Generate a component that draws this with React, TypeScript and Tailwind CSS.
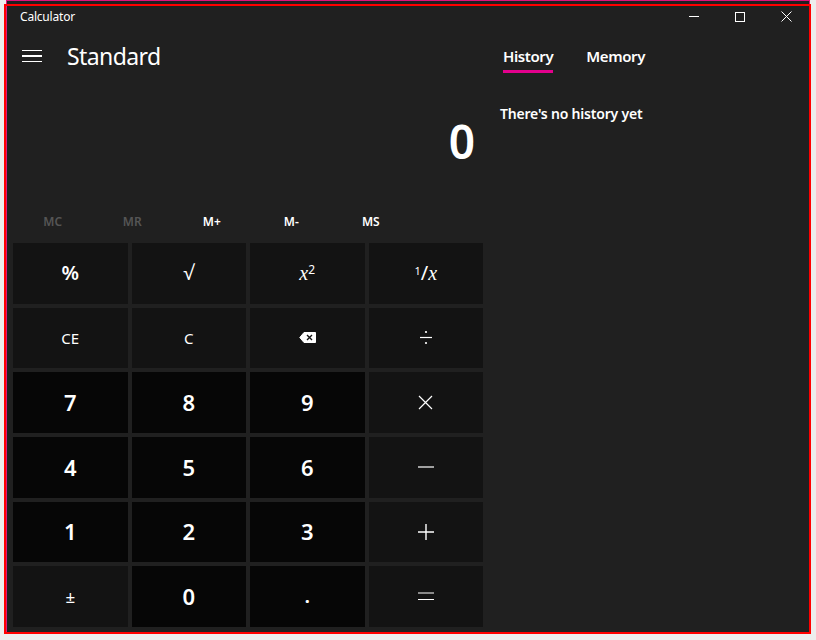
import React from "react";

const font = { fontFamily: '"Noto Sans", "Open Sans", sans-serif' };

type Key = { label: React.ReactNode; kind: "fn" | "num" };

const Minus = () => (
  <svg width="18" height="2" viewBox="0 0 18 2">
    <path d="M1 1 H17" stroke="white" strokeWidth="1.2" />
  </svg>
);

const keys: Key[] = [
  { label: <span className="text-[20px] font-semibold">%</span>, kind: "fn" },
  { label: <span className="text-[20px]">√</span>, kind: "fn" },
  {
    label: (
      <span className="text-[20px]">
        <span className="italic" style={{ fontFamily: '"Liberation Serif", serif' }}>x</span>
        <sup className="text-[12px]">2</sup>
      </span>
    ),
    kind: "fn",
  },
  {
    label: (
      <span className="text-[20px]">
        <sup className="text-[11px]">1</sup>
        <span>/</span>
        <span className="italic" style={{ fontFamily: '"Liberation Serif", serif' }}>x</span>
      </span>
    ),
    kind: "fn",
  },
  { label: <span className="text-[15px]">CE</span>, kind: "fn" },
  { label: <span className="text-[15px]">C</span>, kind: "fn" },
  {
    label: (
      <svg width="17" height="11" viewBox="0 0 17 11" fill="none">
        <path d="M5 0.5 H16.5 V10.5 H5 L0.8 5.5 Z" stroke="white" strokeWidth="1" fill="white" />
        <path d="M8 3 L13 8 M13 3 L8 8" stroke="#131313" strokeWidth="1.4" />
      </svg>
    ),
    kind: "fn",
  },
  {
    label: (
      <svg width="14" height="15" viewBox="0 0 14 15">
        <path d="M1 7.5 H13" stroke="white" strokeWidth="1.2" />
        <circle cx="7" cy="2" r="1.1" fill="white" />
        <circle cx="7" cy="13" r="1.1" fill="white" />
      </svg>
    ),
    kind: "fn",
  },
  { label: "7", kind: "num" },
  { label: "8", kind: "num" },
  { label: "9", kind: "num" },
  {
    label: (
      <svg width="15" height="15" viewBox="0 0 15 15">
        <path d="M1 1 L14 14 M14 1 L1 14" stroke="white" strokeWidth="1.2" />
      </svg>
    ),
    kind: "fn",
  },
  { label: "4", kind: "num" },
  { label: "5", kind: "num" },
  { label: "6", kind: "num" },
  { label: <Minus />, kind: "fn" },
  { label: "1", kind: "num" },
  { label: "2", kind: "num" },
  { label: "3", kind: "num" },
  {
    label: (
      <svg width="18" height="18" viewBox="0 0 18 18">
        <path d="M1 9 H17 M9 1 V17" stroke="white" strokeWidth="1.4" />
      </svg>
    ),
    kind: "fn",
  },
  { label: <span className="text-[17px]">±</span>, kind: "fn" },
  { label: "0", kind: "num" },
  { label: <span className="text-[18px] font-bold">.</span>, kind: "num" },
  {
    label: (
      <svg width="18" height="9" viewBox="0 0 18 9">
        <path d="M1 1 H17 M1 7.5 H17" stroke="white" strokeWidth="1.2" />
      </svg>
    ),
    kind: "fn",
  },
];

const memory = [
  { t: "MC", on: false },
  { t: "MR", on: false },
  { t: "M+", on: true },
  { t: "M-", on: true },
  { t: "MS", on: true },
];

export default function App() {
  return (
    <div className="relative w-[816px] h-[640px] overflow-hidden bg-[#ededed]" style={font}>
      <div className="ml-[6px] w-[804px] h-[633px] border border-[#e0147c] bg-[#202020] flex flex-col text-white">
        {/* title bar */}
        <div className="h-[31px] flex items-center">
          <span className="pl-[13px] text-[12px] flex-1 tracking-[-0.2px]">Calculator</span>
          <div className="flex h-full">
            <div className="w-[46px] flex items-center justify-center">
              <div className="w-[10px] h-px bg-white" />
            </div>
            <div className="w-[46px] flex items-center justify-center">
              <div className="w-[10px] h-[10px] border border-white" />
            </div>
            <div className="w-[46px] flex items-center justify-center">
              <svg width="11" height="11" viewBox="0 0 11 11">
                <path d="M0.5 0.5 L10.5 10.5 M10.5 0.5 L0.5 10.5" stroke="white" strokeWidth="1" />
              </svg>
            </div>
          </div>
        </div>

        <div className="flex flex-1">
          {/* calculator */}
          <div className="w-[480px] flex flex-col">
            <div className="h-[48px] flex items-center">
              <div className="w-[40px] ml-[5px] flex flex-col items-center gap-[4px]">
                <div className="w-[20px] h-[1.5px] bg-white" />
                <div className="w-[20px] h-[1.5px] bg-white" />
                <div className="w-[20px] h-[1.5px] bg-white" />
              </div>
              <span className="ml-[15px] text-[23px] leading-none tracking-[-0.6px]">Standard</span>
            </div>
            <div className="h-[124px] flex justify-end pr-[12px] pt-[38px]">
              <span className="text-[46px] font-semibold leading-none">0</span>
            </div>
            <div className="h-[34px] flex pl-[6px]">
              {memory.map((m) => (
                <div
                  key={m.t}
                  className={`w-[79.5px] flex items-center justify-center text-[12px] font-semibold pt-[2px] ${
                    m.on ? "text-white" : "text-[#555555]"
                  }`}
                >
                  {m.t}
                </div>
              ))}
            </div>
            <div className="mt-[5px] ml-[6px] w-[470px] h-[384px] grid grid-cols-4 grid-rows-6 gap-[4px]">
              {keys.map((k, i) => (
                <div
                  key={i}
                  className={`flex items-center justify-center ${
                    k.kind === "num" ? "bg-[#060606] text-[22px] font-semibold" : "bg-[#131313]"
                  }`}
                >
                  {k.label}
                </div>
              ))}
            </div>
          </div>

          {/* history panel */}
          <div className="flex-1 pl-[16px] pt-[14px]">
            <div className="flex gap-[33px] text-[15px] font-semibold leading-[20px] tracking-[-0.4px]">
              <div className="flex flex-col">
                <span>History</span>
                <div className="mt-[4px] w-[50px] h-[3px] bg-[#e3008c]" />
              </div>
              <span>Memory</span>
            </div>
            <p className="mt-[30px] -ml-[3px] text-[14px] font-semibold tracking-[-0.2px]">There's no history yet</p>
          </div>
        </div>
      </div>

      {/* annotation frame */}
      <div className="absolute left-[4px] top-[4px] w-[807px] h-[630px] border-2 border-[#ff0000] pointer-events-none" />
    </div>
  );
}
